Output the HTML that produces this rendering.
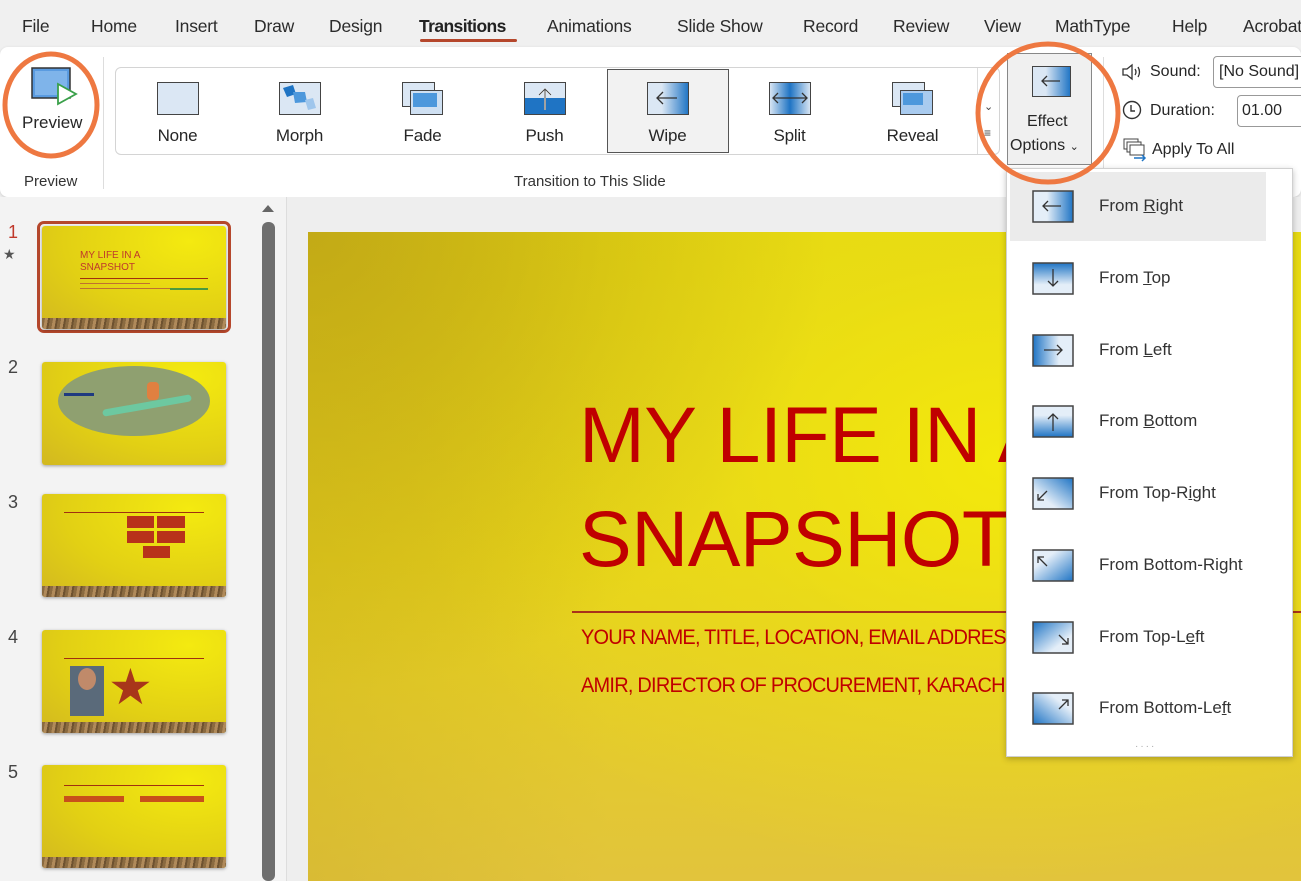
<!DOCTYPE html>
<html><head><meta charset="utf-8">
<style>
*{box-sizing:border-box;margin:0;padding:0}
body{width:1301px;height:881px;overflow:hidden;background:#f0f0f0;font-family:"Liberation Sans",sans-serif;color:#262626;position:relative}
.abs{position:absolute}
.tab{position:absolute;top:16px;font-size:17.5px;color:#2b2b2b;white-space:nowrap;letter-spacing:-0.2px}
.ribbon{position:absolute;left:0;top:47px;width:1301px;height:150px;background:#fff;border-radius:8px;box-shadow:0 1px 3px rgba(0,0,0,.15)}
.gal{position:absolute;left:115px;top:67px;width:885px;height:88px;border:1px solid #d4d4d4;border-radius:6px;background:#fff}
.item{position:absolute;top:69px;width:121px;height:83px;text-align:center}
.item .ic{position:absolute;left:40px;top:13px;width:42px;height:34px}
.item .lb{position:absolute;left:0;right:0;top:57px;font-size:17px;color:#262626;letter-spacing:-0.2px}
.mi{position:absolute;left:1010px;width:256px;height:68px}
.mi svg{position:absolute;left:22px;top:18px}
.mi span{position:absolute;left:89px;top:24px;font-size:17px;color:#333}
.num{position:absolute;left:8px;font-size:18px;color:#444}
.th{position:absolute;left:42px;width:184px;height:103px;background:radial-gradient(ellipse at 80% 15%,#f4ea10,#e2d014 60%,#d2b820);box-shadow:0 1px 3px rgba(0,0,0,.35);border-radius:3px;overflow:hidden}
.wood{position:absolute;left:0;right:0;bottom:0;height:11px;background:repeating-linear-gradient(100deg,#8a6a40 0 3px,#b08a5a 3px 6px,#6e5230 6px 8px)}
.sub{position:absolute;left:273px;font-size:21px;color:#c00000;white-space:nowrap;letter-spacing:-0.8px;transform:scaleX(.95);transform-origin:left}
</style></head><body>

<!-- tabs -->
<div class="tab" style="left:22px">File</div>
<div class="tab" style="left:91px">Home</div>
<div class="tab" style="left:175px">Insert</div>
<div class="tab" style="left:254px">Draw</div>
<div class="tab" style="left:329px">Design</div>
<div class="tab" style="left:419px;font-weight:bold;color:#222;letter-spacing:-0.6px;font-size:17.5px">Transitions</div>
<div class="abs" style="left:420px;top:39px;width:97px;height:3px;background:#b5472c;border-radius:2px"></div>
<div class="tab" style="left:547px">Animations</div>
<div class="tab" style="left:677px">Slide Show</div>
<div class="tab" style="left:803px">Record</div>
<div class="tab" style="left:893px">Review</div>
<div class="tab" style="left:984px">View</div>
<div class="tab" style="left:1055px">MathType</div>
<div class="tab" style="left:1172px">Help</div>
<div class="tab" style="left:1243px">Acrobat</div>

<div class="ribbon"></div>
<!-- preview -->
<svg class="abs" style="left:30px;top:66px" width="50" height="42"><rect x="2" y="2" width="38" height="30" fill="#5a9be0" stroke="#333" stroke-width="1.5"/><rect x="5" y="5" width="32" height="24" fill="#7fb4ea"/><path d="M28 18 L46 28 L28 38 Z" fill="#fff" stroke="#3aa04a" stroke-width="1.8"/></svg>
<div class="abs" style="left:22px;top:113px;font-size:17px">Preview</div>
<div class="abs" style="left:24px;top:173px;font-size:15px;color:#333">Preview</div>
<div class="abs" style="left:103px;top:57px;width:1px;height:132px;background:#ddd"></div>
<div class="abs" style="left:1103px;top:57px;width:1px;height:132px;background:#ddd"></div>

<div class="gal"></div>
<div class="abs" style="left:977px;top:68px;width:1px;height:86px;background:#ddd"></div>
<div class="abs" style="left:984px;top:100px;font-size:11px;color:#444">&#8964;</div>
<div class="abs" style="left:984px;top:126px;font-size:12px;color:#444">&#8801;</div>

<div class="item" style="left:117px"><svg class="ic" width="42" height="34"><rect x="0.5" y="0.5" width="41" height="32" fill="#dbe7f4" stroke="#444"/></svg><div class="lb">None</div></div>
<div class="item" style="left:239px"><svg class="ic" width="42" height="34"><rect x="0.5" y="0.5" width="41" height="32" fill="#dbe7f4" stroke="#444"/><path d="M4 6 L14 3 L17 12 L8 15Z" fill="#1f74c4"/><path d="M14 10 L26 10 L28 20 L16 21Z" fill="#4d98dc"/><path d="M26 18 L34 16 L37 26 L29 28Z" fill="#9fc6ec"/></svg><div class="lb">Morph</div></div>
<div class="item" style="left:362px"><svg class="ic" width="42" height="34"><rect x="0.5" y="0.5" width="32" height="24" fill="#dbe7f4" stroke="#444"/><rect x="8.5" y="8.5" width="32" height="24" fill="#cfe0f2" stroke="#444"/><rect x="11" y="11" width="24" height="14" fill="#4d98dc"/></svg><div class="lb">Fade</div></div>
<div class="item" style="left:484px"><svg class="ic" width="42" height="34"><rect x="0.5" y="0.5" width="41" height="32" fill="#dbe7f4" stroke="#444"/><rect x="1" y="16" width="40" height="16" fill="#1f74c4"/><path d="M21 28 V8 M15 13 L21 7 L27 13" stroke="#fff" stroke-width="2" fill="none"/><path d="M21 28 V8 M15 13 L21 7 L27 13" stroke="#444" stroke-width="1" fill="none"/></svg><div class="lb">Push</div></div>
<div class="abs" style="left:607px;top:69px;width:122px;height:84px;border:1px solid #555;background:#f2f2f2"></div>
<div class="item" style="left:607px"><svg class="ic" width="42" height="34"><defs><linearGradient id="gw" x1="0" x2="1"><stop offset="0.35" stop-color="#dbe7f4"/><stop offset="1" stop-color="#1f74c4"/></linearGradient></defs><rect x="0.5" y="0.5" width="41" height="32" fill="url(#gw)" stroke="#444"/><path d="M30 16 H10 M16 10 L10 16 L16 22" stroke="#333" stroke-width="1.3" fill="none"/></svg><div class="lb">Wipe</div></div>
<div class="item" style="left:729px"><svg class="ic" width="42" height="34"><defs><linearGradient id="gs" x1="0" x2="1"><stop offset="0" stop-color="#dbe7f4"/><stop offset="0.5" stop-color="#1f74c4"/><stop offset="1" stop-color="#dbe7f4"/></linearGradient></defs><rect x="0.5" y="0.5" width="41" height="32" fill="url(#gs)" stroke="#444"/><path d="M4 16 H38 M9 11 L4 16 L9 21 M33 11 L38 16 L33 21" stroke="#333" stroke-width="1.3" fill="none"/></svg><div class="lb">Split</div></div>
<div class="item" style="left:852px"><svg class="ic" width="42" height="34"><rect x="0.5" y="0.5" width="32" height="24" fill="#dbe7f4" stroke="#444"/><rect x="8.5" y="8.5" width="32" height="24" fill="#a9cbef" stroke="#444"/><rect x="11" y="11" width="20" height="12" fill="#4d98dc"/></svg><div class="lb">Reveal</div></div>
<div class="abs" style="left:514px;top:173px;font-size:15px;color:#333">Transition to This Slide</div>

<!-- effect options -->
<div class="abs" style="left:1007px;top:53px;width:85px;height:112px;background:#f0f0f0;border:1px solid #888"></div>
<svg class="abs" style="left:1032px;top:66px" width="40" height="32"><defs><linearGradient id="ge" x1="0" x2="1"><stop offset="0.35" stop-color="#dbe7f4"/><stop offset="1" stop-color="#1f74c4"/></linearGradient></defs><rect x="0.5" y="0.5" width="38" height="30" fill="url(#ge)" stroke="#444"/><path d="M28 15 H10 M15 10 L10 15 L15 20" stroke="#333" stroke-width="1.3" fill="none"/></svg>
<div class="abs" style="left:1027px;top:113px;font-size:16px">Effect</div>
<div class="abs" style="left:1010px;top:137px;font-size:16px">Options <span style="font-size:11px">&#8964;</span></div>

<!-- sound etc -->
<svg class="abs" style="left:1121px;top:62px" width="24" height="20"><path d="M2 7 H6 L11 3 V17 L6 13 H2 Z" fill="none" stroke="#333" stroke-width="1.3"/><path d="M14 7 Q16 10 14 13 M17 5 Q20 10 17 15" fill="none" stroke="#333" stroke-width="1.3"/></svg>
<div class="abs" style="left:1150px;top:63px;font-size:16px">Sound:</div>
<div class="abs" style="left:1213px;top:56px;width:100px;height:32px;border:1px solid #999;border-radius:4px;background:#fff;font-size:16px;padding:6px 0 0 5px;white-space:nowrap">[No Sound]</div>
<svg class="abs" style="left:1122px;top:100px" width="20" height="20"><circle cx="10" cy="10" r="8.5" stroke="#333" stroke-width="1.4" fill="none"/><path d="M9 5 V11 H13" stroke="#333" stroke-width="1.4" fill="none"/></svg>
<div class="abs" style="left:1150px;top:102px;font-size:16px">Duration:</div>
<div class="abs" style="left:1237px;top:95px;width:80px;height:32px;border:1px solid #999;border-radius:4px;background:#fff;font-size:16px;padding:6px 0 0 4px">01.00</div>
<svg class="abs" style="left:1123px;top:138px" width="26" height="24"><rect x="1" y="1" width="14" height="10" fill="#fff" stroke="#444"/><rect x="4" y="4" width="14" height="10" fill="#fff" stroke="#444"/><rect x="7" y="7" width="14" height="10" fill="#fff" stroke="#444"/><path d="M11 20 H22 M19 17 L22 20 L19 23" stroke="#1f74c4" stroke-width="1.5" fill="none"/></svg>
<div class="abs" style="left:1152px;top:141px;font-size:16px">Apply To All</div>

<!-- left pane -->
<div class="abs" style="left:0;top:197px;width:286px;height:684px;background:#f3f3f3"></div>
<div class="abs" style="left:286px;top:197px;width:1px;height:684px;background:#ddd"></div>
<div class="abs" style="left:262px;top:205px;width:0;height:0;border-left:6px solid transparent;border-right:6px solid transparent;border-bottom:7px solid #666"></div>
<div class="abs" style="left:262px;top:222px;width:13px;height:659px;background:#6e6e6e;border-radius:6px"></div>

<div class="num" style="top:222px;color:#c0392b">1</div>
<div class="abs" style="left:3px;top:246px;font-size:14px;color:#555">&#9733;</div>
<div class="abs" style="left:37px;top:221px;width:194px;height:112px;border:3px solid #b5472c;border-radius:7px"></div>
<div class="th" style="top:226px">
  <div class="abs" style="left:38px;top:24px;font-size:10px;line-height:12px;color:#c0392b">MY LIFE IN A<br>SNAPSHOT</div>
  <div class="abs" style="left:38px;top:52px;width:128px;height:1px;background:#a03010"></div>
  <div class="abs" style="left:38px;top:57px;width:70px;height:1px;background:#c07030"></div>
  <div class="abs" style="left:38px;top:62px;width:90px;height:1px;background:#c07030"></div>
  <div class="abs" style="left:128px;top:62px;width:38px;height:2px;background:#4a9a40"></div>
  <div class="wood"></div>
</div>
<div class="num" style="top:357px">2</div>
<div class="th" style="top:362px"><div class="abs" style="left:16px;top:4px;width:152px;height:70px;border-radius:50%;background:#8fa070"></div><div class="abs" style="left:60px;top:40px;width:90px;height:7px;background:#6dc8a0;border-radius:4px;transform:rotate(-10deg)"></div><div class="abs" style="left:105px;top:20px;width:12px;height:18px;background:#e08040;border-radius:4px"></div><div class="abs" style="left:22px;top:31px;width:30px;height:3px;background:#1f3a80"></div></div>
<div class="num" style="top:492px">3</div>
<div class="th" style="top:494px"><div class="abs" style="left:22px;top:18px;width:140px;height:1px;background:#a03010"></div><div class="abs" style="left:85px;top:22px;width:27px;height:12px;background:#b8321a"></div><div class="abs" style="left:115px;top:22px;width:28px;height:12px;background:#b8321a"></div><div class="abs" style="left:85px;top:37px;width:27px;height:12px;background:#b8321a"></div><div class="abs" style="left:115px;top:37px;width:28px;height:12px;background:#b8321a"></div><div class="abs" style="left:101px;top:52px;width:27px;height:12px;background:#b8321a"></div><div class="wood"></div></div>
<div class="num" style="top:627px">4</div>
<div class="th" style="top:630px"><div class="abs" style="left:22px;top:28px;width:140px;height:1px;background:#a03010"></div><div class="abs" style="left:28px;top:36px;width:34px;height:50px;background:#5a6a7a"></div><div class="abs" style="left:36px;top:38px;width:18px;height:22px;background:#c08a6a;border-radius:50%"></div><div class="abs" style="left:66px;top:32px;font-size:50px;line-height:50px;color:#a8361a">&#9733;</div><div class="wood"></div></div>
<div class="num" style="top:762px">5</div>
<div class="th" style="top:765px"><div class="abs" style="left:22px;top:20px;width:140px;height:1px;background:#a03010"></div><div class="abs" style="left:22px;top:31px;width:60px;height:6px;background:#c8501a"></div><div class="abs" style="left:98px;top:31px;width:64px;height:6px;background:#c8501a"></div><div class="wood"></div></div>

<!-- main slide -->
<div class="abs" style="left:287px;top:197px;width:1014px;height:684px;background:#eeeeee"></div>
<div class="abs" style="left:308px;top:232px;width:993px;height:649px;background:linear-gradient(180deg,#e4d612 0%,#e6d21a 50%,#e2c43c 100%);overflow:hidden">
  <div class="abs" style="left:0;top:0;width:993px;height:649px;background:radial-gradient(ellipse 600px 420px at 700px 230px,rgba(245,235,10,.9) 0%,rgba(240,230,20,.4) 50%,rgba(240,230,20,0) 100%)"></div>
  <div class="abs" style="left:0;top:0;width:993px;height:649px;background:radial-gradient(ellipse 520px 460px at 0 0,rgba(170,140,20,.55) 0%,rgba(170,140,20,0) 100%)"></div>
  <div class="abs" style="left:0;top:0;width:300px;height:649px;background:linear-gradient(90deg,rgba(190,160,30,.25),rgba(190,160,30,0))"></div>
  <div class="abs" style="left:271px;top:151px;font-size:79px;line-height:104px;color:#c00000;white-space:nowrap;letter-spacing:-0.5px">MY LIFE IN A<br>SNAPSHOT</div>
  <div class="abs" style="left:264px;top:379px;width:800px;height:2px;background:#a8321a"></div>
  <div class="sub" style="top:394px">YOUR NAME, TITLE, LOCATION, EMAIL ADDRESS</div>
  <div class="sub" style="top:442px">AMIR, DIRECTOR OF PROCUREMENT, KARACHI</div>
</div>

<!-- menu -->
<div class="abs" style="left:1006px;top:168px;width:287px;height:589px;background:#fff;border:1px solid #d0d0d0;box-shadow:0 2px 6px rgba(0,0,0,.25)"></div>
<div class="abs" style="left:1010px;top:172px;width:256px;height:69px;background:#ebebeb"></div>
<svg width="0" height="0" style="position:absolute"><defs>
<linearGradient id="mR" x1="0" x2="1"><stop offset=".35" stop-color="#e4eef8"/><stop offset="1" stop-color="#1f74c4"/></linearGradient>
<linearGradient id="mT" x1="0" x2="0" y1="0" y2="1"><stop offset="0" stop-color="#1f74c4"/><stop offset=".7" stop-color="#e4eef8"/></linearGradient>
<linearGradient id="mL" x1="1" x2="0"><stop offset=".35" stop-color="#e4eef8"/><stop offset="1" stop-color="#1f74c4"/></linearGradient>
<linearGradient id="mB" x1="0" x2="0" y1="1" y2="0"><stop offset="0" stop-color="#1f74c4"/><stop offset=".7" stop-color="#e4eef8"/></linearGradient>
<linearGradient id="mTR" x1="0" y1="1" x2="1" y2="0"><stop offset=".3" stop-color="#e4eef8"/><stop offset="1" stop-color="#1f74c4"/></linearGradient>
<linearGradient id="mBR" x1="0" y1="0" x2="1" y2="1"><stop offset=".3" stop-color="#e4eef8"/><stop offset="1" stop-color="#1f74c4"/></linearGradient>
<linearGradient id="mTL" x1="1" y1="1" x2="0" y2="0"><stop offset=".3" stop-color="#e4eef8"/><stop offset="1" stop-color="#1f74c4"/></linearGradient>
<linearGradient id="mBL" x1="1" y1="0" x2="0" y2="1"><stop offset=".3" stop-color="#e4eef8"/><stop offset="1" stop-color="#1f74c4"/></linearGradient>
</defs></svg>
<div class="mi" style="top:172px"><svg width="42" height="33"><rect x="1" y="1" width="40" height="31" fill="url(#mR)" stroke="#444" stroke-width="1.5"/><path d="M29 16 H11 M16 11 L11 16 L16 21" stroke="#333" stroke-width="1.3" fill="none"/></svg><span>From <u>R</u>ight</span></div>
<div class="mi" style="top:244px"><svg width="42" height="33"><rect x="1" y="1" width="40" height="31" fill="url(#mT)" stroke="#444" stroke-width="1.5"/><path d="M21 7 V24 M16 19 L21 24 L26 19" stroke="#333" stroke-width="1.3" fill="none"/></svg><span>From <u>T</u>op</span></div>
<div class="mi" style="top:316px"><svg width="42" height="33"><rect x="1" y="1" width="40" height="31" fill="url(#mL)" stroke="#444" stroke-width="1.5"/><path d="M12 16 H30 M25 11 L30 16 L25 21" stroke="#333" stroke-width="1.3" fill="none"/></svg><span>From <u>L</u>eft</span></div>
<div class="mi" style="top:387px"><svg width="42" height="33"><rect x="1" y="1" width="40" height="31" fill="url(#mB)" stroke="#444" stroke-width="1.5"/><path d="M21 26 V9 M16 14 L21 9 L26 14" stroke="#333" stroke-width="1.3" fill="none"/></svg><span>From <u>B</u>ottom</span></div>
<div class="mi" style="top:459px"><svg width="42" height="33"><rect x="1" y="1" width="40" height="31" fill="url(#mTR)" stroke="#444" stroke-width="1.5"/><path d="M15 14 L6 23 M6 17 V23 H12" stroke="#333" stroke-width="1.3" fill="none"/></svg><span>From Top-R<u>i</u>ght</span></div>
<div class="mi" style="top:531px"><svg width="42" height="33"><rect x="1" y="1" width="40" height="31" fill="url(#mBR)" stroke="#444" stroke-width="1.5"/><path d="M15 17 L6 8 M6 14 V8 H12" stroke="#333" stroke-width="1.3" fill="none"/></svg><span>From Bottom-Ri<u>g</u>ht</span></div>
<div class="mi" style="top:603px"><svg width="42" height="33"><rect x="1" y="1" width="40" height="31" fill="url(#mTL)" stroke="#444" stroke-width="1.5"/><path d="M27 14 L36 23 M36 17 V23 H30" stroke="#333" stroke-width="1.3" fill="none"/></svg><span>From Top-L<u>e</u>ft</span></div>
<div class="mi" style="top:674px"><svg width="42" height="33"><rect x="1" y="1" width="40" height="31" fill="url(#mBL)" stroke="#444" stroke-width="1.5"/><path d="M27 17 L36 8 M30 8 H36 V14" stroke="#333" stroke-width="1.3" fill="none"/></svg><span>From Bottom-Le<u>f</u>t</span></div>
<div class="abs" style="left:1135px;top:741px;font-size:10px;color:#aaa;letter-spacing:2px">····</div>

<!-- orange circles -->
<svg class="abs" style="left:0;top:0" width="1301" height="881" pointer-events="none">
<ellipse cx="51" cy="105" rx="46" ry="51" fill="none" stroke="#ee7841" stroke-width="5"/>
<ellipse cx="1048" cy="113" rx="70" ry="69" fill="none" stroke="#ee7841" stroke-width="5"/>
</svg>
</body></html>
